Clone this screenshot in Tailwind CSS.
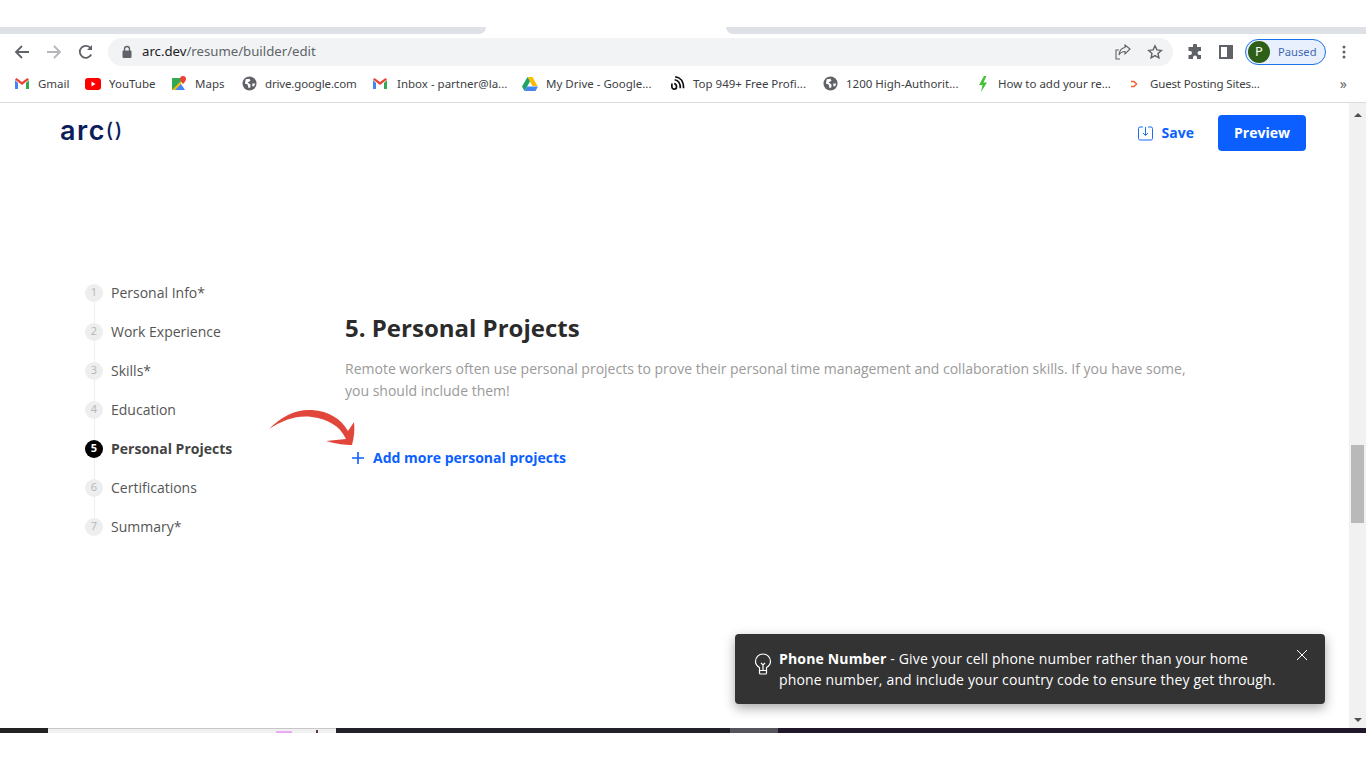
<!DOCTYPE html>
<html lang="en">
<head>
  <meta charset="UTF-8" />
  <title>arc.dev resume builder</title>
  <script src="https://cdn.jsdelivr.net/npm/@tailwindcss/browser@4"></script>
</head>
<body class="bg-white font-['Open_Sans',sans-serif] overflow-hidden">
<div class="w-[1366px] h-[768px] flex flex-col overflow-hidden">

  <!-- tab strip -->
  <div class="h-[27px] bg-white"></div>
  <div class="h-[7px] flex">
    <div class="w-[486px] bg-[#dee1e6] rounded-br-lg"></div>
    <div class="w-[240px] bg-white"></div>
    <div class="flex-1 bg-[#dee1e6] rounded-bl-lg"></div>
  </div>

  <!-- toolbar -->
  <div class="h-9 flex items-center font-['Noto_Sans',sans-serif]">
    <div class="w-[108px] flex items-center pl-[14px] gap-[16px] shrink-0">
      <svg class="w-4 h-4" viewBox="0 0 16 16" fill="none" stroke="#5f6368" stroke-width="1.8"><path d="M15 8H2M8 2 2 8l6 6"/></svg>
      <svg class="w-4 h-4" viewBox="0 0 16 16" fill="none" stroke="#b4b6b9" stroke-width="1.8"><path d="M1 8h13M8 2l6 6-6 6"/></svg>
      <svg class="w-4 h-4" viewBox="0 0 16 16" fill="none" stroke="#5f6368" stroke-width="1.8"><path d="M13.2 10.5A6 6 0 1 1 12.6 4.2"/><path d="M14 1v5H9" fill="#5f6368" stroke="none"/></svg>
    </div>
    <div class="w-[1065px] h-7 bg-[#f1f3f4] rounded-full flex items-center pl-[13px] pr-[10px] shrink-0">
      <svg class="w-3 h-[14px] shrink-0" viewBox="0 0 12 14"><path d="M3.5 6V4a2.500 2.500 0 0 1 5 0v2" fill="none" stroke="#5f6368" stroke-width="1.300"/><rect x="1.500" y="5.500" width="9" height="7.500" rx="1" fill="#5f6368"/></svg>
      <span class="ml-[9px] text-[13.2px] text-[#202124]">arc.dev<span class="text-[#5f6368]">/resume/builder/edit</span></span>
      <div class="ml-auto flex items-center gap-[16px]">
        <svg class="w-4 h-4" viewBox="0 0 16 16" fill="none" stroke="#5f6368" stroke-width="1.100"><path d="M5 15H1V6h3M15 5 10 1v2.500C6 4 4.500 7 4 11c1.500-2.500 3.500-3.500 6-3.500V10z"/></svg>
        <svg class="w-4 h-4" viewBox="0 0 16 16" fill="none" stroke="#5f6368" stroke-width="1.400"><path d="m8 1.800 1.900 4.100 4.400.5-3.300 3 .9 4.400L8 11.600l-3.900 2.200.9-4.400-3.300-3 4.400-.5z"/></svg>
      </div>
    </div>
    <div class="flex items-center ml-[14px]">
      <svg class="w-4 h-4" viewBox="0 0 16 16" fill="#5f6368"><path d="M6 1.500a2 2 0 0 1 4 0V3h4v4h-1.500a2 2 0 0 0 0 4H14v4h-4v-1.500a2 2 0 0 0-4 0V15H1.500v-4H3a2 2 0 0 0 0-4H1.500V3H6z"/></svg>
      <svg class="w-[14px] h-[14px] ml-[16px]" viewBox="0 0 14 14" fill="none"><rect x="1" y="1" width="12" height="12" stroke="#5f6368" stroke-width="2"/><rect x="8" y="1" width="5" height="12" fill="#5f6368"/></svg>
      <div class="ml-[12px] w-[81px] h-[26px] rounded-full border border-[#1a73e8] bg-[#e8f0fe] flex items-center pl-[2px]">
        <div class="w-[22px] h-[22px] rounded-full bg-[#2d5f17] text-white text-[13px] flex items-center justify-center">P</div>
        <span class="ml-[8px] text-[11.2px] text-[#3f68b0]">Paused</span>
      </div>
      <svg class="w-1 h-[14px] ml-[16px]" viewBox="0 0 4 14" fill="#5f6368"><circle cx="2" cy="2" r="1.500"/><circle cx="2" cy="7" r="1.500"/><circle cx="2" cy="12" r="1.500"/></svg>
    </div>
  </div>

  <!-- bookmarks bar -->
  <div class="h-[27px] border-b border-[#dadce0] box-content flex items-center pb-[5px] pl-[15px] text-[11.5px] text-[#3c4043] font-['Noto_Sans',sans-serif] whitespace-nowrap">
    <div class="w-[70px] flex items-center shrink-0">
      <span class="w-[23px]"><svg class="w-[14px] h-[14px]" viewBox="0 0 14 12"><path d="M0 2v9h3V5z" fill="#4285f4"/><path d="M11 5v6h3V2z" fill="#34a853"/><path d="M0 1.500 7 7l7-5.500L12.500 0 7 4 1.500 0z" fill="#ea4335"/></svg></span>
      <span>Gmail</span>
    </div>
    <div class="w-[87px] flex items-center shrink-0">
      <span class="w-[24px]"><svg class="w-[16px] h-[12px]" viewBox="0 0 16 12"><rect width="16" height="12" rx="3" fill="#ff0000"/><path d="m6.500 3.500 4 2.500-4 2.500z" fill="#fff"/></svg></span>
      <span>YouTube</span>
    </div>
    <div class="w-[70px] flex items-center shrink-0">
      <span class="w-[23px]"><svg class="w-[15px] h-[15px]" viewBox="0 0 15 15"><path d="M0 2h9v12H0z" fill="#34a853"/><path d="M0 14 9 5v9z" fill="#fbbc04"/><path d="M3 14 9 8l4 6z" fill="#4285f4"/><path d="M11 0a3 3 0 0 1 3 3c0 2-3 5-3 5S8 5 8 3a3 3 0 0 1 3-3" fill="#ea4335"/></svg></span>
      <span>Maps</span>
    </div>
    <div class="w-[131px] flex items-center shrink-0">
      <span class="w-[23px]"><svg class="w-[15px] h-[15px]" viewBox="0 0 16 16"><circle cx="8" cy="8" r="7.500" fill="#5f6368"/><path d="M4 3.500 8 3l1 2-3 2 3 2v3l-2 1-1-4-3-1zM11 8h3l-1 3h-2z" fill="#fff"/></svg></span>
      <span class="tracking-[-0.15px]">drive.google.com</span>
    </div>
    <div class="w-[149px] flex items-center shrink-0">
      <span class="w-[24px]"><svg class="w-[14px] h-[14px]" viewBox="0 0 14 12"><path d="M0 2v9h3V5z" fill="#4285f4"/><path d="M11 5v6h3V2z" fill="#34a853"/><path d="M0 1.500 7 7l7-5.500L12.500 0 7 4 1.500 0z" fill="#ea4335"/></svg></span>
      <span>Inbox - partner@la...</span>
    </div>
    <div class="w-[148px] flex items-center shrink-0">
      <span class="w-[24px]"><svg class="w-[16px] h-[14px]" viewBox="0 0 16 14"><path d="M5.500 0h5l5 9h-5z" fill="#fbbc04"/><path d="M5.500 0 0 9.500l2.500 4.500L8 4.500z" fill="#1fa463"/><path d="M2.500 14h11l2.500-4.500H5z" fill="#4285f4"/></svg></span>
      <span>My Drive - Google...</span>
    </div>
    <div class="w-[153px] flex items-center shrink-0">
      <span class="w-[23px]"><svg class="w-[15px] h-[15px]" viewBox="0 0 16 16" fill="none" stroke="#111" stroke-width="1.800"><path d="M2 8v3.500a2.500 2.500 0 0 0 5 0c0-2-1-3-2.500-3.500"/><path d="M5 4c4 .5 6 3.500 6 9"/><path d="M5.500 1c5 .2 9 4 9 12"/></svg></span>
      <span>Top 949+ Free Profi...</span>
    </div>
    <div class="w-[154px] flex items-center shrink-0">
      <span class="w-[23px]"><svg class="w-[15px] h-[15px]" viewBox="0 0 16 16"><circle cx="8" cy="8" r="7.500" fill="#5f6368"/><path d="M4 3.500 8 3l1 2-3 2 3 2v3l-2 1-1-4-3-1zM11 8h3l-1 3h-2z" fill="#fff"/></svg></span>
      <span>1200 High-Authorit...</span>
    </div>
    <div class="w-[153px] flex items-center shrink-0">
      <span class="w-[21px]"><svg class="w-[12px] h-[16px]" viewBox="0 0 12 16"><path d="M7 0 2 9h3.500L4 16l6-9.500H6.500L9.500 0z" fill="#44c134"/></svg></span>
      <span>How to add your re...</span>
    </div>
    <div class="flex items-center shrink-0">
      <span class="w-[20px]"><svg class="w-2 h-2" viewBox="0 0 8 8" fill="none" stroke="#f4622a" stroke-width="1.500"><path d="M1 1.500h3L6.500 4 4 6.500H1"/></svg></span>
      <span class="tracking-[-0.15px]">Guest Posting Sites...</span>
    </div>
    <span class="ml-auto mr-[19px] text-[14px] leading-none text-[#5f6368]">»</span>
  </div>

  <!-- page viewport -->
  <div class="relative h-[625px] flex">
    <main class="flex-1 min-w-0">
      <header class="h-[60px] flex items-start pl-[60px] pr-[43px]">
        <span class="mt-[11px] text-[27px] leading-[32px] font-['Inter',sans-serif] font-semibold tracking-[1.5px] text-[#0b1d5a]">arc<span class="text-[20px] font-medium tracking-[1.5px] align-[3px]">()</span></span>
        <div class="ml-auto mt-[12px] flex items-center">
          <svg class="w-[15px] h-[15px]" viewBox="0 0 15 15" fill="none" stroke="#1a6cf5" stroke-width="1"><path d="M5 1H2a1.500 1.500 0 0 0-1.500 1.500v10A1.500 1.500 0 0 0 2 14h11a1.500 1.500 0 0 0 1.500-1.500v-10A1.500 1.500 0 0 0 13 1h-3"/><path d="M7.500 1v8M5 7l2.500 2.500L10 7"/></svg>
          <span class="ml-[9px] text-[14px] font-bold text-[#0b5fff] pb-[2px]">Save</span>
          <button class="ml-[24px] w-[88px] h-9 rounded-[4px] bg-[#0b5fff] text-white text-[14px] font-bold pb-[2px]">Preview</button>
        </div>
      </header>

      <div class="flex pl-[85px] pt-[110px]">
        <!-- steps -->
        <ol class="w-[260px] flex flex-col relative text-[14px] text-[#555]">
          <li class="h-[39px] flex items-center gap-2"><span class="w-[18px] h-[18px] rounded-full bg-[#eeeeee] text-[#b5b5b5] text-[11px] flex items-center justify-center">1</span>Personal Info*</li>
          <li class="h-[39px] flex items-center gap-2"><span class="w-[18px] h-[18px] rounded-full bg-[#eeeeee] text-[#b5b5b5] text-[11px] flex items-center justify-center">2</span>Work Experience</li>
          <li class="h-[39px] flex items-center gap-2"><span class="w-[18px] h-[18px] rounded-full bg-[#eeeeee] text-[#b5b5b5] text-[11px] flex items-center justify-center">3</span>Skills*</li>
          <li class="h-[39px] flex items-center gap-2"><span class="w-[18px] h-[18px] rounded-full bg-[#eeeeee] text-[#b5b5b5] text-[11px] flex items-center justify-center">4</span>Education</li>
          <li class="h-[39px] flex items-center gap-2 font-bold text-[#444]"><span class="w-[18px] h-[18px] rounded-full bg-black text-white text-[11px] flex items-center justify-center">5</span>Personal Projects</li>
          <li class="h-[39px] flex items-center gap-2"><span class="w-[18px] h-[18px] rounded-full bg-[#eeeeee] text-[#b5b5b5] text-[11px] flex items-center justify-center">6</span>Certifications</li>
          <li class="h-[39px] flex items-center gap-2"><span class="w-[18px] h-[18px] rounded-full bg-[#eeeeee] text-[#b5b5b5] text-[11px] flex items-center justify-center">7</span>Summary*</li>
          <span class="absolute left-[8.500px] top-[28px] bottom-[28px] w-px bg-[#eeeeee] -z-10"></span>
        </ol>

        <!-- section -->
        <section class="w-[850px] pt-[38px]">
          <h2 class="text-[24px] leading-[33px] font-bold text-[#2b2b2b]">5. Personal Projects</h2>
          <p class="mt-[14px] text-[14px] leading-[22px] text-[#9a9a9a]">Remote workers often use personal projects to prove their personal time management and collaboration skills. If you have some, you should include them!</p>
          <div class="mt-[45px] ml-[7px] flex items-center text-[14px] font-bold text-[#0b5fff]">
            <svg class="w-3 h-3" viewBox="0 0 12 12" stroke="#0b5fff" stroke-width="1.600"><path d="M6 0v12M0 6h12"/></svg>
            <span class="ml-[9px]">Add more personal projects</span>
          </div>
        </section>
      </div>
    </main>

    <!-- scrollbar -->
    <div class="w-[17px] bg-[#f1f1f1] flex flex-col items-center shrink-0">
      <svg class="w-2 h-1 mt-[10px]" viewBox="0 0 8 4" fill="#505050"><path d="M4 0 8 4H0z"/></svg>
      <div class="w-[13px] h-[78px] mt-[328px] bg-[#b9b9b9]"></div>
      <svg class="w-2 h-1 mt-auto mb-[6px]" viewBox="0 0 8 4" fill="#505050"><path d="M0 0h8L4 4z"/></svg>
    </div>

    <!-- red arrow drawn over the page -->
    <svg class="absolute left-[268px] top-[305px] w-[88px] h-[38px]" viewBox="0 0 88 38"><path d="M1 21C14 8 28 1 44 2c17 1 29 9 36 21l6-9c1 8 0 15-2 23-7 0-15-1-26-4l20-2C72 18 60 11 44 9 29 7 15 12 1 21z" fill="#e2463b"/></svg>

    <!-- toast -->
    <div class="absolute left-[735px] top-[531px] w-[590px] h-[70px] rounded-[4px] bg-[#333333] shadow-[0_4px_12px_rgba(0,0,0,0.35)] flex pl-[18px] pt-[14px]">
      <svg class="w-[20px] h-[22px] mt-[5px] shrink-0" viewBox="0 0 20 22" fill="none" stroke="#fff" stroke-width="1.200"><path d="M6.500 14.500C4 13 2.500 10.800 2.500 8.500a7.500 7.500 0 0 1 15 0c0 2.300-1.500 4.500-4 6V20a1 1 0 0 1-1 1h-5a1 1 0 0 1-1-1z"/><path d="M6.500 17.500h7M8 10l2 2 2-2M10 12v5"/></svg>
      <p class="ml-[6px] text-[14px] leading-[21px] text-white whitespace-nowrap tracking-[0.16px]"><b>Phone Number</b> - Give your cell phone number rather than your home<br>phone number, and include your country code to ensure they get through.</p>
      <svg class="absolute right-[18px] top-[16px] w-[10px] h-[10px]" viewBox="0 0 10 10" stroke="#fff" stroke-width="1"><path d="m0 0 10 10M10 0 0 10"/></svg>
    </div>
  </div>

  <!-- desktop taskbar remnant -->
  <div class="h-[5px] flex bg-[#221f28]">
    <div class="w-12 bg-[#222222]"></div>
    <div class="w-[288px] bg-[#f0f0f0] border-t border-[#c8c8c8] flex justify-end items-end pr-[18px] gap-[24px]">
      <span class="w-4 h-[2px] bg-[#e879f0]/60"></span>
      <span class="w-[2px] h-[3px] bg-[#5a3a45]"></span>
    </div>
    <div class="w-[394px] bg-[#23222a]"></div>
    <div class="w-12 bg-[#55535c]"></div>
    <div class="flex-1 bg-[#21172b]"></div>
  </div>
  <div class="flex-1 bg-white"></div>
</div>
</body>
</html>
